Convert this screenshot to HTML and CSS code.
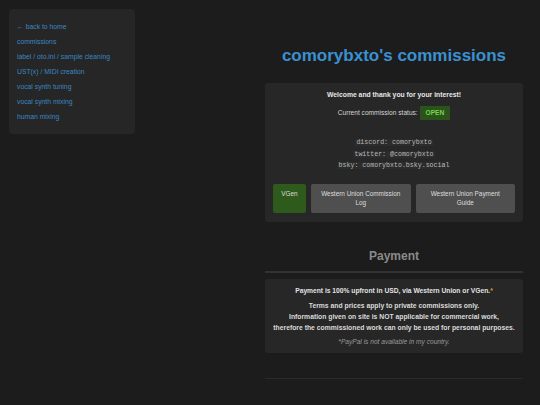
FILE: index.html
```
<!DOCTYPE html>
<html>
<head>
<meta charset="utf-8">
<link rel="stylesheet" href="styles.css">
</head>
<body>
<div class="layout">
  <nav class="sidebar">
    <a class="nav-link" href="#">← back to home</a>
    <a class="nav-link" href="#">commissions</a>
    <a class="nav-link" href="#">label / oto.ini / sample cleaning</a>
    <a class="nav-link" href="#">UST(x) / MIDI creation</a>
    <a class="nav-link" href="#">vocal synth tuning</a>
    <a class="nav-link" href="#">vocal synth mixing</a>
    <a class="nav-link" href="#">human mixing</a>
  </nav>
  <main class="main">
    <h1 class="title">comorybxto's commissions</h1>
    <section class="card intro">
      <p class="welcome">Welcome and thank you for your interest!</p>
      <div class="status">Current commission status: <span class="badge">OPEN</span></div>
      <div class="contacts">
        <div><code>discord: comorybxto</code></div>
        <div><code>twitter: @comorybxto</code></div>
        <div><code>bsky: comorybxto.bsky.social</code></div>
      </div>
      <div class="buttons">
        <a class="btn btn-green" href="#">VGen</a>
        <a class="btn btn-grey" href="#">Western Union Commission Log</a>
        <a class="btn btn-grey" href="#">Western Union Payment Guide</a>
      </div>
    </section>
    <h2 class="section-title">Payment</h2>
    <section class="card payment">
      <p class="pay-line">Payment is 100% upfront in USD, via Western Union or VGen.<span class="star">*</span></p>
      <p class="terms">Terms and prices apply to private commissions only.<br>Information given on site is NOT applicable for commercial work,<br>therefore the commissioned work can only be used for personal purposes.</p>
      <p class="note">*PayPal is not available in my country.</p>
    </section>
    <hr class="divider">
  </main>
</div>
</body>
</html>
```
FILE: styles.css
```
html, body {
  margin: 0;
  padding: 0;
  background: #1c1c1c;
  font-family: "Liberation Sans", Arial, sans-serif;
  color: #dcdcdc;
}
.layout {
  display: flex;
  align-items: flex-start;
  padding: 9px;
}
.sidebar {
  width: 126px;
  box-sizing: border-box;
  height: 125px;
  background: #262626;
  border-radius: 4px;
  padding: 9.5px 8px 0;
  display: flex;
  flex-direction: column;
}
.nav-link {
  color: #3b86c0;
  text-decoration: none;
  font-size: 6.8px;
  line-height: 15px;
  white-space: nowrap;
}
.main {
  margin-left: 130px;
  width: 258px;
  display: flex;
  flex-direction: column;
}
.title {
  margin: 37px 0 0;
  font-size: 17px;
  line-height: 20px;
  color: #3a91d2;
  text-align: center;
  font-weight: bold;
}
.card {
  background: #272727;
  border-radius: 3px;
  text-align: center;
}
.intro {
  margin-top: 17px;
  padding: 7px 8px 9px;
}
.welcome {
  margin: 0;
  font-size: 6.8px;
  line-height: 10px;
  font-weight: bold;
  color: #e6e6e6;
}
.status {
  margin-top: 6px;
  font-size: 6.6px;
  line-height: 14px;
  color: #d4d4d4;
}
.badge {
  display: inline-block;
  vertical-align: top;
  background: #2b531b;
  color: #76d64c;
  font-weight: bold;
  padding: 0 6px;
  line-height: 14px;
  border-radius: 1px;
}
.contacts {
  margin-top: 17px;
  font-family: "Liberation Mono", "Courier New", monospace;
  font-size: 6.6px;
  line-height: 11.5px;
  color: #b9b9b9;
}
.contacts code {
  font-family: inherit;
  background: #2c2c2c;
  padding: 0 1px;
}
.buttons {
  margin-top: 12px;
  display: flex;
  gap: 5px;
}
.btn {
  box-sizing: border-box;
  height: 29px;
  padding: 5.5px 6px 0;
  font-size: 6.4px;
  line-height: 9px;
  color: #dedede;
  text-decoration: none;
  border-radius: 2px;
}
.btn-green {
  width: 33px;
  background: #2e5a1b;
}
.btn-grey {
  flex: 1;
  background: #4f4f4f;
}
.section-title {
  margin: 27px 0 0;
  padding-bottom: 8px;
  border-bottom: 2px solid #323232;
  font-size: 12px;
  line-height: 14px;
  color: #8a8a8a;
  text-align: center;
  font-weight: bold;
}
.payment {
  margin-top: 6px;
  padding: 7px 4px 6px;
}
.pay-line {
  margin: 0;
  font-size: 6.7px;
  line-height: 10px;
  font-weight: bold;
  color: #e2e2e2;
}
.star {
  color: #e0a020;
}
.terms {
  margin: 4.5px 0 0;
  font-size: 6.8px;
  line-height: 11px;
  font-weight: bold;
  color: #dadada;
}
.note {
  margin: 3.5px 0 0;
  font-size: 6.6px;
  line-height: 10px;
  font-style: italic;
  color: #9a9a9a;
}
.divider {
  margin: 25px 0 0;
  border: 0;
  height: 1px;
  background: #2a2a2a;
}
```
